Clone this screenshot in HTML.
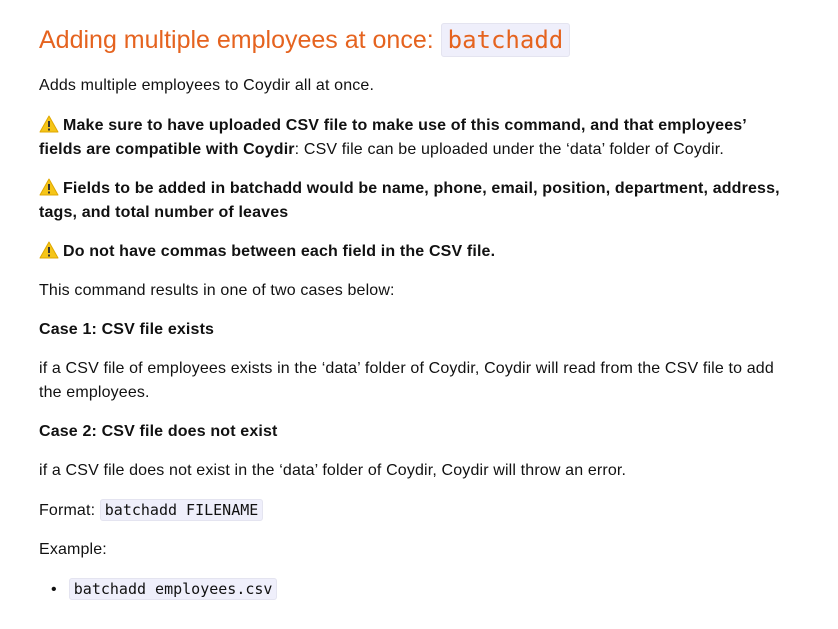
<html><head><style>
body{margin:0;background:#fff;font-family:"Liberation Sans",sans-serif;color:#111;font-size:16px;line-height:24px;letter-spacing:0.15px}
.w{position:absolute;left:39px;top:0;width:745px}
h2{font-weight:normal;color:#e5631f;font-size:25px;margin:22px 0 0;line-height:36px;letter-spacing:0}
h2 code{font-size:24px;padding:2px 6px;color:#e5631f}
p{margin:15px 0 0}
code{font-family:"DejaVu Sans Mono","Liberation Mono",monospace;font-size:15px;letter-spacing:0;background:#efeffb;border:1px solid #e4e4f0;border-radius:3px;padding:1px 4px}
.wa{display:inline-block;width:20px;height:18px;vertical-align:-3px;margin-right:4px}
ul{margin:15px 0 0;padding-left:12px;list-style:none}
li:before{content:"•";margin-right:12px}
</style></head><body><div class="w">
<h2>Adding multiple employees at once: <code>batchadd</code></h2>
<p style="margin-top:16px">Adds multiple employees to Coydir all at once.</p>
<p style="margin-top:16px"><svg class="wa" viewBox="0 0 20 18"><path d="M10 1 L19 17 L1 17 Z" fill="#f5c518" stroke="#e0a800" stroke-linejoin="round"/><rect x="9" y="6" width="2" height="6" fill="#333"/><rect x="9" y="13.5" width="2" height="2" fill="#333"/></svg><b>Make sure to have uploaded CSV file to make use of this command, and that employees’ fields are compatible with Coydir</b>: CSV file can be uploaded under the ‘data’ folder of Coydir.</p>
<p><svg class="wa" viewBox="0 0 20 18"><path d="M10 1 L19 17 L1 17 Z" fill="#f5c518" stroke="#e0a800" stroke-linejoin="round"/><rect x="9" y="6" width="2" height="6" fill="#333"/><rect x="9" y="13.5" width="2" height="2" fill="#333"/></svg><b>Fields to be added in batchadd would be name, phone, email, position, department, address, tags, and total number of leaves</b></p>
<p><svg class="wa" viewBox="0 0 20 18"><path d="M10 1 L19 17 L1 17 Z" fill="#f5c518" stroke="#e0a800" stroke-linejoin="round"/><rect x="9" y="6" width="2" height="6" fill="#333"/><rect x="9" y="13.5" width="2" height="2" fill="#333"/></svg><b>Do not have commas between each field in the CSV file.</b></p>
<p>This command results in one of two cases below:</p>
<p><b>Case 1: CSV file exists</b></p>
<p>if a CSV file of employees exists in the ‘data’ folder of Coydir, Coydir will read from the CSV file to add the employees.</p>
<p><b>Case 2: CSV file does not exist</b></p>
<p>if a CSV file does not exist in the ‘data’ folder of Coydir, Coydir will throw an error.</p>
<p>Format: <code>batchadd FILENAME</code></p>
<p>Example:</p>
<ul><li><code>batchadd employees.csv</code></li></ul>
</div></body></html>
